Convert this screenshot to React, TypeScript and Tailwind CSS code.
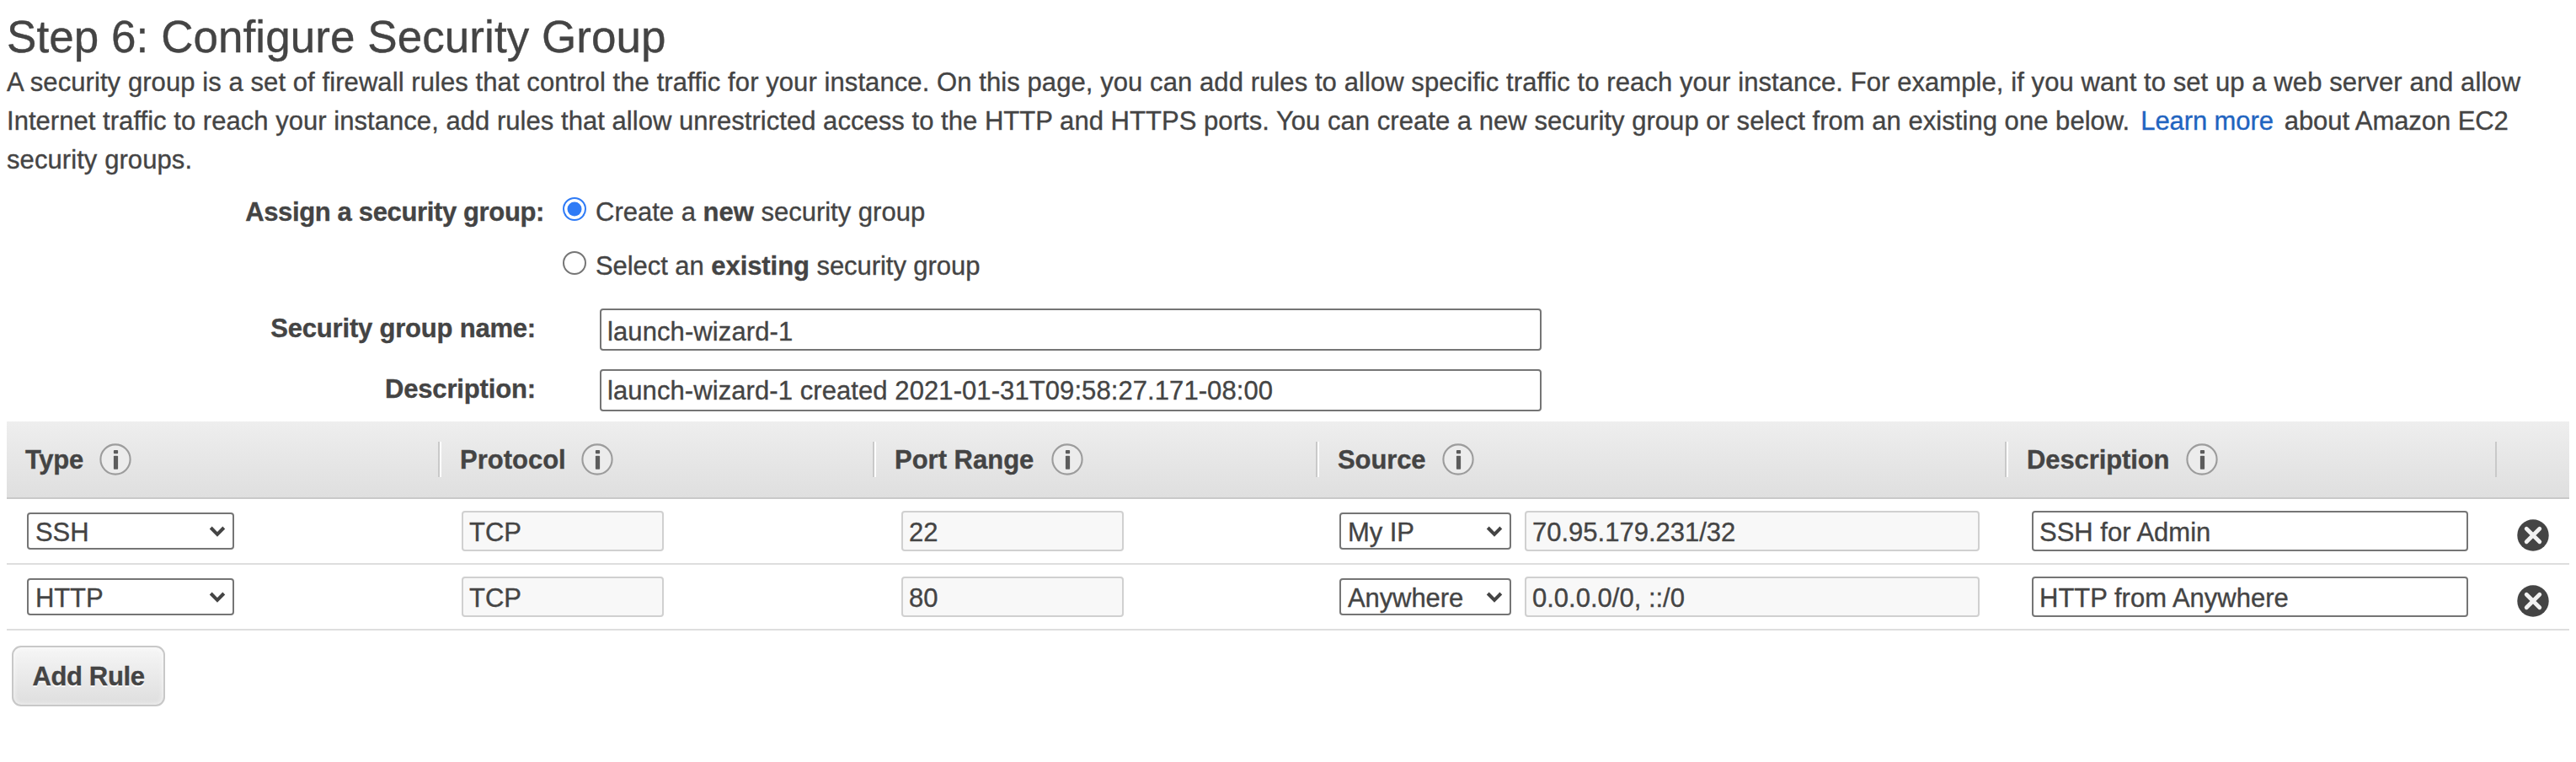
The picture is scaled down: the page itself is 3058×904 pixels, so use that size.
import React from "react";

function InfoIcon() {
  return (
    <svg viewBox="0 0 38 38" className="mt-[2px] h-[38px] w-[38px] shrink-0">
      <circle cx="19" cy="19" r="17.6" fill="#ececec" stroke="#9c9c9c" strokeWidth="2.1" />
      <rect x="16.9" y="7.9" width="5.2" height="4.4" rx="1" fill="#5c5c5c" />
      <rect x="16.9" y="14.8" width="5.2" height="16" rx="0.8" fill="#5c5c5c" />
    </svg>
  );
}

function DeleteIcon() {
  return (
    <svg viewBox="0 0 38 38" className="h-[38px] w-[38px]">
      <circle cx="19" cy="19" r="18.7" fill="#444" />
      <path d="M11.2 11.2L26.8 26.8M26.8 11.2L11.2 26.8" stroke="#f2f2f2" strokeWidth="4.8" strokeLinecap="round" />
    </svg>
  );
}

function Radio({ checked = false }: { checked?: boolean }) {
  return (
    <svg viewBox="0 0 28 28" className="h-7 w-7 shrink-0">
      <circle cx="14" cy="14" r="13" fill="#fff" stroke={checked ? "#2f7bf6" : "#767676"} strokeWidth="2" />
      {checked && <circle cx="14" cy="14" r="8.5" fill="#2f7bf6" />}
    </svg>
  );
}

function Select({ value, className }: { value: string; className: string }) {
  return (
    <div className={"flex h-11 items-center justify-between rounded-[4px] border-2 border-[#757575] bg-white pr-2 pl-2 " + className}>
      <span className="pt-[3px] leading-[37px] tracking-[-0.1px]">{value}</span>
      <svg viewBox="0 0 20 14" className="h-[14px] w-5">
        <path d="M2.2 3L10 11L17.8 3" fill="none" stroke="#444" strokeWidth="4" />
      </svg>
    </div>
  );
}

function Field({ value, disabled, className }: { value: string; disabled?: boolean; className: string }) {
  return (
    <div
      className={
        "flex items-center rounded-[4px] border-2 pl-[7px] " +
        (disabled ? "border-[#d0d0d0] bg-[#f8f8f8] " : "border-[#757575] bg-white ") +
        className
      }
    >
      <span className="leading-[36px]">{value}</span>
    </div>
  );
}

const GRID = "grid grid-cols-[512px_516px_526px_818px_582px_88px]";

const headers = [
  { label: "Type", width: "w-[88px]", tracking: "tracking-[-0.3px]" },
  { label: "Protocol", width: "w-[144px]", tracking: "" },
  { label: "Port Range", width: "w-[186px]", tracking: "" },
  { label: "Source", width: "w-[124px]", tracking: "tracking-[-0.1px]" },
  { label: "Description", width: "w-[189px]", tracking: "tracking-[-0.1px]" },
];

const rules = [
  { type: "SSH", port: "22", source: "My IP", cidr: "70.95.179.231/32", note: "SSH for Admin" },
  { type: "HTTP", port: "80", source: "Anywhere", cidr: "0.0.0.0/0, ::/0", note: "HTTP from Anywhere" },
];

export default function App() {
  return (
    <main className="h-[904px] w-[3058px] overflow-hidden bg-white px-2 font-['Liberation_Sans',Arial,sans-serif] text-[31px] text-[#444444] [-webkit-text-stroke:0.35px_currentColor]">
      <h1 className="pt-[14px] text-[53px] leading-[60px] tracking-[0.06px] whitespace-nowrap">Step 6: Configure Security Group</h1>
      <div className="mt-[1px] leading-[46px] whitespace-nowrap">
        <p className="tracking-[0.08px]">
          A security group is a set of firewall rules that control the traffic for your instance. On this page, you can add rules to allow specific traffic to reach your instance. For example, if you want to set up a web server and allow
        </p>
        <p>
          <span className="tracking-[0.04px]">Internet traffic to reach your instance, add rules that allow unrestricted access to the HTTP and HTTPS ports. You can create a new security group or select from an existing one below.</span>
          <a className="mx-[13px] tracking-[-0.1px] text-[#1f64c0]">Learn more</a>
          <span className="tracking-[-0.07px]">about Amazon EC2</span>
        </p>
        <p className="tracking-[0.08px]">security groups.</p>
      </div>
      <section className="mt-[3px] h-[284px] whitespace-nowrap">
        <div className="flex h-16 items-start pt-[18px]">
          <div className="w-[638px] text-right leading-[36px] font-bold tracking-[-0.36px]">Assign a security group:</div>
          <div className="ml-[22px] flex"><Radio checked /></div>
          <div className="ml-[11px] leading-[36px]">Create a <b>new</b> security group</div>
        </div>
        <div className="flex h-16 items-start pt-[18px]">
          <div className="ml-[660px] flex"><Radio /></div>
          <div className="ml-[11px] leading-[36px] tracking-[-0.06px]">Select an <b>existing</b> security group</div>
        </div>
        <div className="flex h-[72px] items-start pt-[22px]">
          <div className="w-[628px] pt-[6px] text-right leading-[36px] font-bold tracking-[-0.2px]">Security group name:</div>
          <Field value="launch-wizard-1" className="ml-[76px] h-[50px] w-[1118px] pt-[5px] tracking-[0.1px]" />
        </div>
        <div className="flex h-[72px] items-start pt-[22px]">
          <div className="w-[628px] pt-[6px] text-right leading-[36px] font-bold tracking-[-0.15px]">Description:</div>
          <Field value="launch-wizard-1 created 2021-01-31T09:58:27.171-08:00" className="ml-[76px] h-[50px] w-[1118px] pt-[2px] tracking-[0.08px]" />
        </div>
      </section>
      <section className="w-[3042px] whitespace-nowrap">
        <div className={GRID + " h-[92px] border-b-2 border-[#c9c9c9] bg-linear-to-b from-[#eeeeee] to-[#dfdfdf]"}>
          {headers.map((h, i) => (
            <div key={h.label} className="flex pt-6">
              {i > 0 && <span className="h-[42px] w-1 border-r-2 border-l-2 border-r-white border-l-[#c9c9c9]" />}
              <span className={"ml-[22px] pt-[1px] leading-[42px] font-bold " + h.width + " " + h.tracking}>{h.label}</span>
              <InfoIcon />
            </div>
          ))}
          <div className="flex pt-6"><span className="h-[42px] w-[2px] bg-[#c9c9c9]" /></div>
        </div>
        {rules.map((r) => (
          <div key={r.type} className={GRID + " h-[78px] items-start border-b-2 border-[#dedede] pt-[14px]"}>
            <Select value={r.type} className="mt-[2px] ml-6 w-[246px]" />
            <Field value="TCP" disabled className="ml-7 h-12 w-[240px] pt-[3px]" />
            <Field value={r.port} disabled className="ml-[34px] h-12 w-[264px] pt-[3px]" />
            <div className="flex">
              <Select value={r.source} className="mt-[2px] ml-7 w-[204px]" />
              <Field value={r.cidr} disabled className="ml-4 h-12 w-[540px] pt-[3px]" />
            </div>
            <Field value={r.note} className="ml-8 h-12 w-[518px] pt-[3px]" />
            <div className="pt-[10px] pl-[26px]"><DeleteIcon /></div>
          </div>
        ))}
        <button className="mt-[18px] ml-[6px] flex h-[72px] w-[182px] items-center justify-center rounded-[11px] border-2 border-[#c8c8c8] bg-linear-to-b from-[#f6f6f6] to-[#dedede] pt-[3px] font-bold tracking-[-0.35px] shadow-[inset_0_0_6px_rgba(255,255,255,0.8)] [text-shadow:0_2px_0_#fff]">
          Add Rule
        </button>
      </section>
    </main>
  );
}
